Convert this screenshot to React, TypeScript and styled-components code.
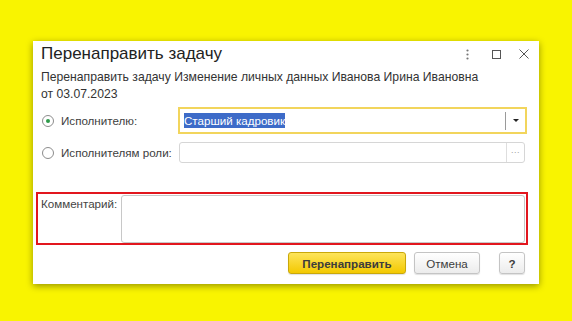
import React from 'react';
import styled, { createGlobalStyle } from 'styled-components';

const Global = createGlobalStyle`
  html, body { margin: 0; padding: 0; }
  body {
    background: #f9f400;
    font-family: "Liberation Sans", Arial, sans-serif;
  }
`;

const Page = styled.div`
  width: 572px;
  height: 321px;
  box-sizing: border-box;
  padding: 41px 0 0 33px;
  background: #f9f400;
  overflow: hidden;
`;

const Dialog = styled.div`
  width: 506px;
  height: 243px;
  box-sizing: border-box;
  background: #fff;
  box-shadow: 0 2px 7px rgba(0, 0, 0, 0.4);
  padding: 1px 12px 0 8px;
  display: flex;
  flex-direction: column;
  color: #333;
`;

const Header = styled.div`
  display: flex;
  align-items: center;
  height: 24px;
  margin-right: -2px;
`;

const Title = styled.div`
  font-size: 17px;
  line-height: 24px;
  color: #222;
`;

const HeaderTools = styled.div`
  margin-left: auto;
  display: flex;
  align-items: center;
`;

const Tool = styled.div<{ $w: number; $gap: number }>`
  width: ${(p) => p.$w}px;
  margin-left: ${(p) => p.$gap}px;
  height: 14px;
  display: flex;
  align-items: center;
  justify-content: center;
`;

const Subtitle = styled.div`
  margin-top: 3px;
  font-size: 12.2px;
  line-height: 17px;
  max-width: 442px;
  color: #333;
`;

const FormRow = styled.div<{ $h: number; $mt: number }>`
  display: grid;
  grid-template-columns: 137px 1fr;
  height: ${(p) => p.$h}px;
  margin-top: ${(p) => p.$mt}px;
  align-items: center;
`;

const Choice = styled.div`
  display: flex;
  align-items: center;
  gap: 7px;
  padding-left: 1px;
  font-size: 11.6px;
  white-space: nowrap;
  color: #404040;
`;

const Radio = styled.span<{ $on?: boolean }>`
  width: 12px;
  height: 12px;
  flex: none;
  box-sizing: border-box;
  border-radius: 50%;
  border: 1px solid #8c8c8c;
  display: flex;
  align-items: center;
  justify-content: center;
  &::after {
    content: '';
    width: 4px;
    height: 4px;
    border-radius: 50%;
    background: ${(p) => (p.$on ? '#2e9a4a' : 'transparent')};
  }
`;

const FocusField = styled.div`
  height: 27px;
  box-sizing: border-box;
  border: 2px solid #f2d55c;
  display: flex;
  align-items: center;
  padding-left: 4px;
`;

const Selected = styled.span`
  font-size: 11.6px;
  line-height: 15px;
  background: #3d6bc8;
  color: #fff;
`;

const DropButton = styled.div`
  margin-left: auto;
  width: 19px;
  height: 18px;
  border-left: 1px solid #9a9a9a;
  display: flex;
  align-items: center;
  justify-content: center;
  &::after {
    content: '';
    border-left: 3px solid transparent;
    border-right: 3px solid transparent;
    border-top: 3px solid #222;
  }
`;

const PlainField = styled.div`
  height: 21px;
  box-sizing: border-box;
  margin: 0 2px 0 1px;
  border: 1px solid #d6d6d6;
  border-radius: 3px;
  display: flex;
  justify-content: flex-end;
`;

const PickButton = styled.div`
  width: 17px;
  border-left: 1px solid #dedede;
  color: #a0a0a0;
  font-size: 9px;
  line-height: 14px;
  text-align: center;
  letter-spacing: 0.5px;
`;

const CommentBlock = styled.div`
  margin: 29px -1px 0 -5px;
  height: 53px;
  box-sizing: border-box;
  border: 2px solid #e2161e;
  display: flex;
  padding: 1px 1px 0 3px;
`;

const CommentLabel = styled.div`
  width: 80px;
  font-size: 11.6px;
  line-height: 17px;
  color: #444;
`;

const CommentArea = styled.div`
  flex: 1;
  height: 48px;
  box-sizing: border-box;
  border: 1px solid #c8c8c8;
  border-radius: 3px;
`;

const Buttons = styled.div`
  margin-top: 7px;
  height: 22px;
  padding-right: 2px;
  display: flex;
  justify-content: flex-end;
`;

const Button = styled.div<{ $w: number; $gap?: number; $primary?: boolean; $bold?: boolean }>`
  width: ${(p) => p.$w}px;
  margin-left: ${(p) => p.$gap ?? 0}px;
  box-sizing: border-box;
  border-radius: 3px;
  border: 1px solid ${(p) => (p.$primary ? '#c9a80a' : '#c4c4c4')};
  background: ${(p) =>
    p.$primary
      ? 'linear-gradient(#fde45a, #f3c900)'
      : 'linear-gradient(#ffffff, #ececec)'};
  box-shadow: 0 1px 1px rgba(0, 0, 0, 0.12);
  display: flex;
  align-items: center;
  justify-content: center;
  font-size: 11.6px;
  font-weight: ${(p) => (p.$bold ? 700 : 400)};
  color: #3c3c3c;
`;

const Kebab = () => (
  <svg width="3" height="11" viewBox="0 0 3 11">
    <circle cx="1.5" cy="1.5" r="1.1" fill="#777" />
    <circle cx="1.5" cy="5.5" r="1.1" fill="#777" />
    <circle cx="1.5" cy="9.5" r="1.1" fill="#777" />
  </svg>
);

const Square = () => (
  <svg width="9" height="9" viewBox="0 0 9 9">
    <rect x="0.5" y="0.5" width="8" height="8" fill="none" stroke="#555" strokeWidth="1" />
  </svg>
);

const Cross = () => (
  <svg width="10" height="10" viewBox="0 0 10 10">
    <path d="M0.5 0.5 L9.5 9.5 M9.5 0.5 L0.5 9.5" stroke="#555" strokeWidth="1" fill="none" />
  </svg>
);

export default function App() {
  return (
    <>
      <Global />
      <Page>
        <Dialog>
          <Header>
            <Title>Перенаправить задачу</Title>
            <HeaderTools>
              <Tool $w={3} $gap={0}>
                <Kebab />
              </Tool>
              <Tool $w={9} $gap={23}>
                <Square />
              </Tool>
              <Tool $w={10} $gap={18}>
                <Cross />
              </Tool>
            </HeaderTools>
          </Header>
          <Subtitle>
            Перенаправить задачу Изменение личных данных Иванова Ирина Ивановна от 03.07.2023
          </Subtitle>
          <FormRow $h={27} $mt={4}>
            <Choice>
              <Radio $on />
              Исполнителю:
            </Choice>
            <FocusField>
              <Selected>Старший кадровик</Selected>
              <DropButton />
            </FocusField>
          </FormRow>
          <FormRow $h={21} $mt={8}>
            <Choice>
              <Radio />
              Исполнителям роли:
            </Choice>
            <PlainField>
              <PickButton>...</PickButton>
            </PlainField>
          </FormRow>
          <CommentBlock>
            <CommentLabel>Комментарий:</CommentLabel>
            <CommentArea />
          </CommentBlock>
          <Buttons>
            <Button $w={118} $primary $bold>
              Перенаправить
            </Button>
            <Button $w={66} $gap={8}>
              Отмена
            </Button>
            <Button $w={26} $gap={19} $bold>
              ?
            </Button>
          </Buttons>
        </Dialog>
      </Page>
    </>
  );
}
